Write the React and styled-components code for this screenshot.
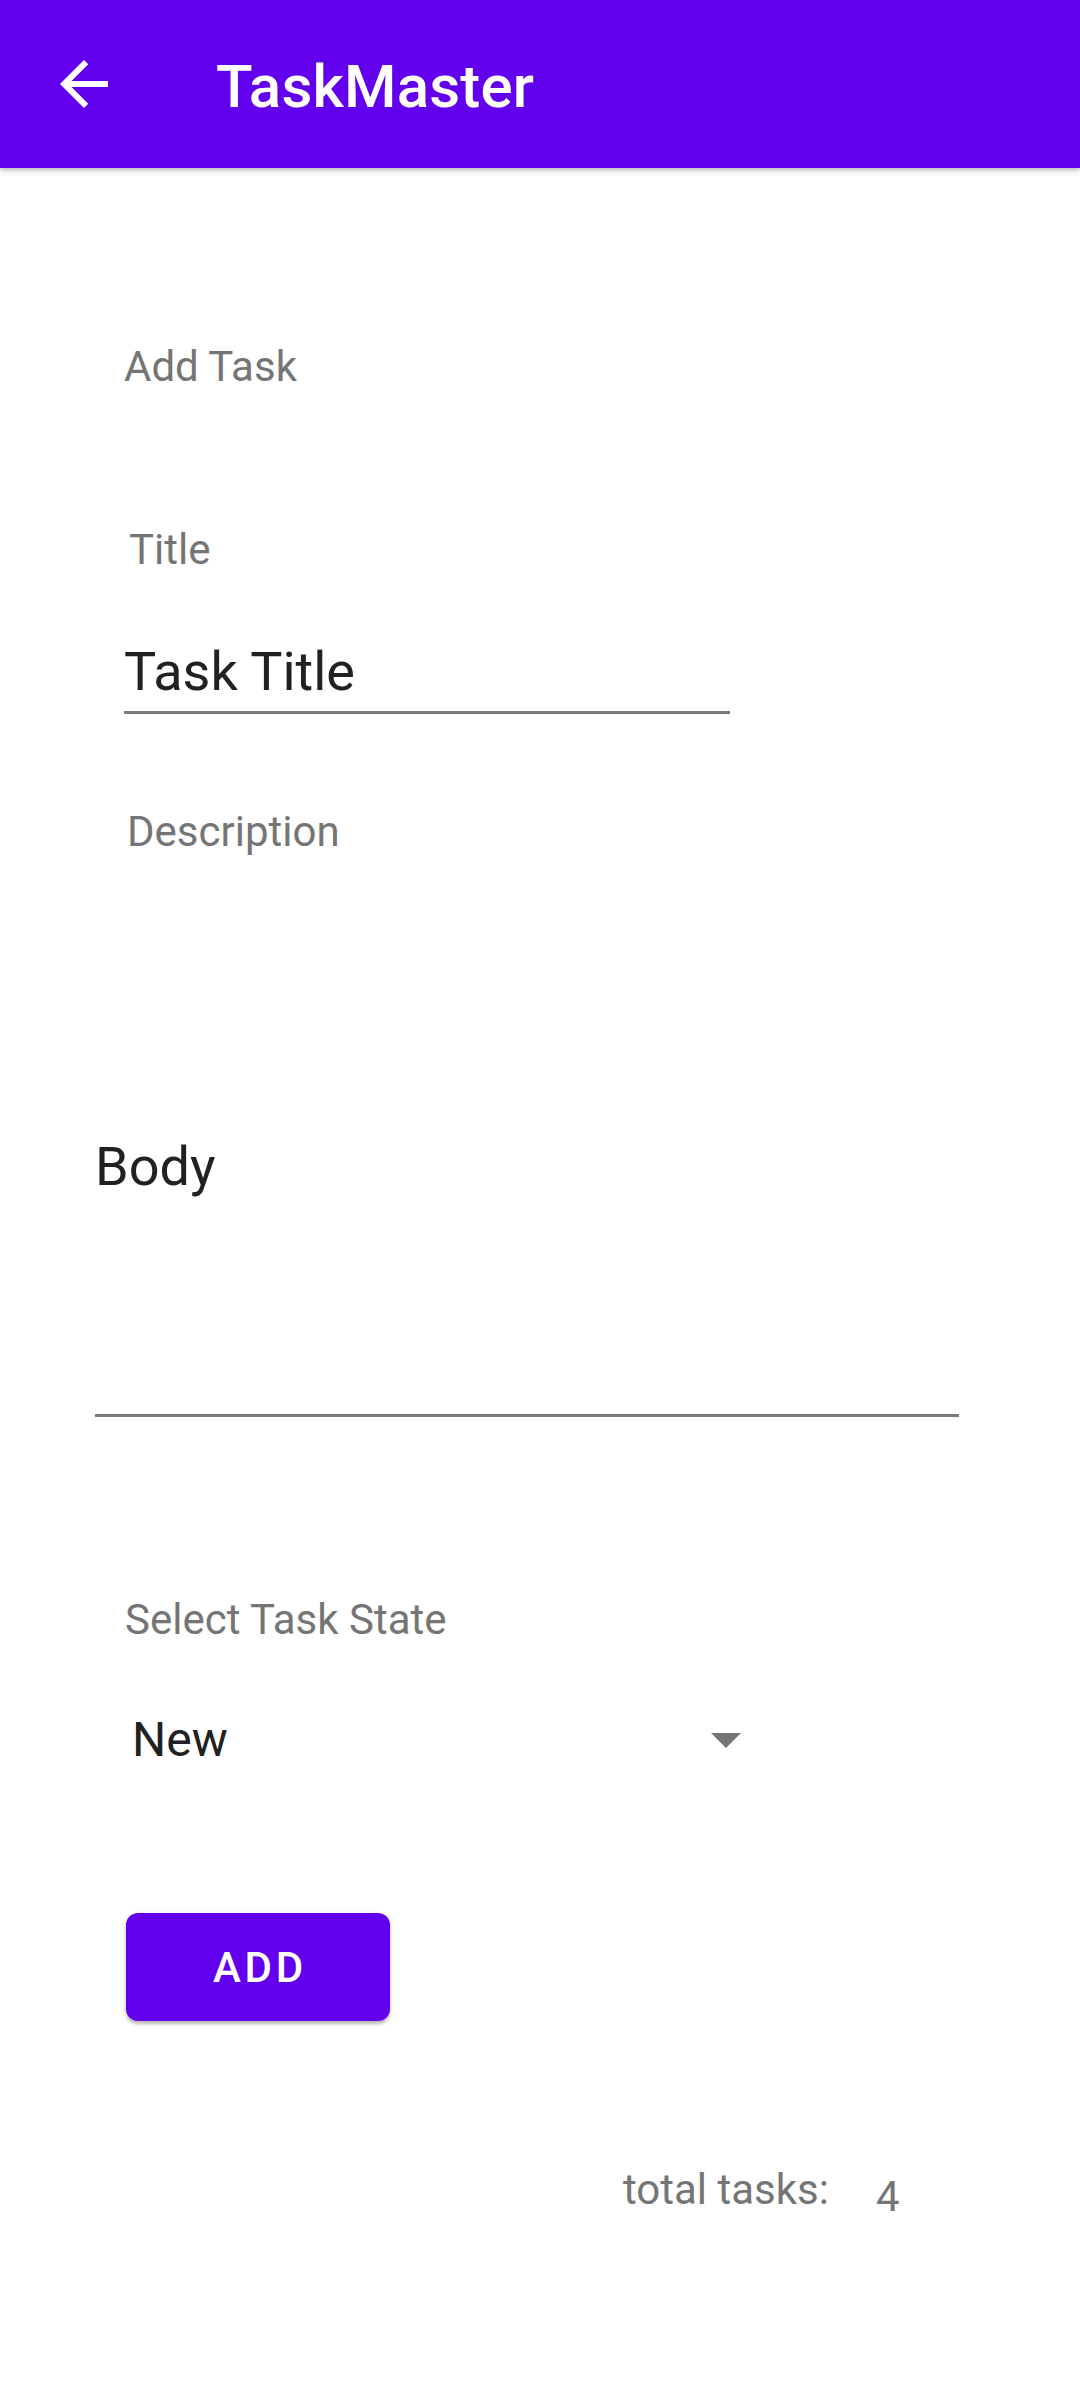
import React from "react";
import styled, { createGlobalStyle } from "styled-components";

const Global = createGlobalStyle`
  html, body {
    margin: 0;
    padding: 0;
    background: #ffffff;
  }
  body {
    font-family: Roboto, "Noto Sans", "Liberation Sans", sans-serif;
    -webkit-font-smoothing: antialiased;
  }
`;

const Screen = styled.div`
  width: 1080px;
  height: 2400px;
  background: #ffffff;
  display: flex;
  flex-direction: column;
  overflow: hidden;
`;

const AppBar = styled.header`
  position: relative;
  z-index: 1;
  height: 168px;
  flex: none;
  background: #6200ee;
  display: flex;
  align-items: center;
  padding-left: 48px;
  box-shadow: 0 3px 6px rgba(0, 0, 0, 0.16), 0 2px 3px rgba(0, 0, 0, 0.1);
`;

const NavButton = styled.button`
  width: 72px;
  height: 72px;
  padding: 0;
  border: 0;
  background: transparent;
  display: flex;
  align-items: center;
  justify-content: center;
  color: #ffffff;
`;

const AppTitle = styled.h1`
  margin: 5px 0 0 96px;
  font-size: 60px;
  line-height: 60px;
  font-weight: 500;
  color: #ffffff;
  letter-spacing: 0.2px;
`;

const Form = styled.main`
  display: flex;
  flex-direction: column;
  align-items: flex-start;
`;

const Label = styled.div`
  margin-top: ${(p) => p.$top}px;
  margin-left: ${(p) => p.$left}px;
  font-size: 42px;
  line-height: 42px;
  color: #757575;
`;

const Field = styled.div`
  margin-top: ${(p) => p.$top}px;
  margin-left: ${(p) => p.$left}px;
  width: ${(p) => p.$width}px;
  padding-bottom: ${(p) => p.$gap}px;
  border-bottom: 3px solid #7a7a7a;
`;

const Value = styled.div`
  font-size: 54px;
  line-height: 54px;
  color: #212121;
`;

const Spinner = styled.div`
  margin-top: ${(p) => p.$top}px;
  margin-left: 132px;
  width: 609px;
  height: 54px;
  display: flex;
  align-items: center;
  justify-content: space-between;
`;

const SpinnerValue = styled.span`
  font-size: 48px;
  line-height: 54px;
  color: #212121;
`;

const Caret = styled.span`
  width: 0;
  height: 0;
  border-left: 15px solid transparent;
  border-right: 15px solid transparent;
  border-top: 15px solid #757575;
`;

const AddButton = styled.button`
  margin-top: 146px;
  margin-left: 126px;
  width: 264px;
  height: 108px;
  border: 0;
  border-radius: 12px;
  background: #6200ee;
  color: #ffffff;
  font-family: Roboto, "Noto Sans", "Liberation Sans", sans-serif;
  font-size: 42px;
  font-weight: 500;
  letter-spacing: 3.8px;
  padding: 0 0 0 4px;
  display: flex;
  align-items: center;
  justify-content: center;
  box-shadow: 0 3px 3px rgba(0, 0, 0, 0.2), 0 2px 6px rgba(0, 0, 0, 0.12);
`;

const Footer = styled.div`
  margin-top: 148px;
  margin-left: 623px;
  display: flex;
  align-items: flex-start;
  gap: 47px;
  font-size: 42px;
  line-height: 42px;
  color: #757575;
`;

const Count = styled.span`
  padding-top: 7px;
`;

function BackArrow() {
  return (
    <svg width="72" height="72" viewBox="0 0 24 24" fill="currentColor" aria-hidden="true">
      <path d="M20 11H7.83l5.59-5.59L12 4l-8 8 8 8 1.41-1.41L7.83 13H20v-2z" />
    </svg>
  );
}

export default function App() {
  return (
    <>
      <Global />
      <Screen>
        <AppBar>
          <NavButton aria-label="Back">
            <BackArrow />
          </NavButton>
          <AppTitle>TaskMaster</AppTitle>
        </AppBar>
        <Form>
          <Label $top={178} $left={124}>Add Task</Label>
          <Label $top={141} $left={129}>Title</Label>
          <Field $top={74} $left={124} $width={606} $gap={12}>
            <Value>Task Title</Value>
          </Field>
          <Label $top={97} $left={127}>Description</Label>
          <Field $top={287} $left={95} $width={864} $gap={220}>
            <Value>Body</Value>
          </Field>
          <Label $top={182} $left={125}>Select Task State</Label>
          <Spinner $top={72}>
            <SpinnerValue>New</SpinnerValue>
            <Caret />
          </Spinner>
          <AddButton>ADD</AddButton>
          <Footer>
            <span>total tasks:</span>
            <Count>4</Count>
          </Footer>
        </Form>
      </Screen>
    </>
  );
}
